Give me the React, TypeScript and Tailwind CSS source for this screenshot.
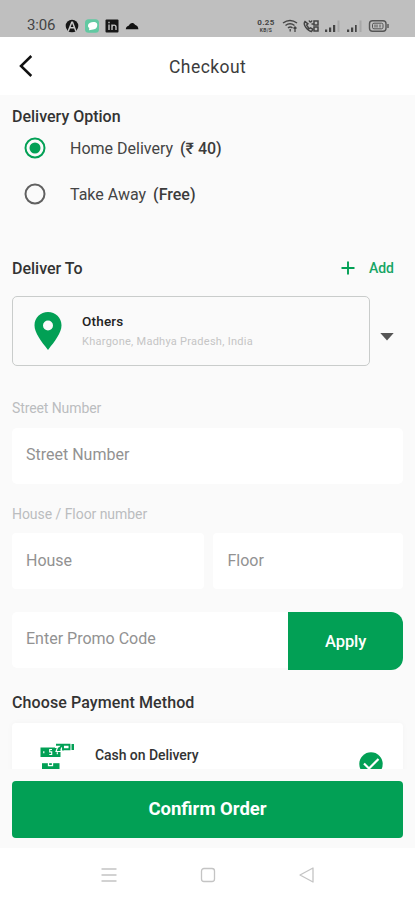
import type { ReactNode } from "react";

function StatusBar() {
  return (
    <div className="flex h-[37px] shrink-0 items-end bg-[#bfbfbf] pb-[4px] pl-[27px] pr-[25px] text-[#444]">
      <span className="w-[38px] whitespace-nowrap text-[15px] leading-[15px] tracking-[-0.2px]">3:06</span>
      <svg className="block h-[14px] w-[74px]" viewBox="0 0 74 14">
        <circle cx="7" cy="7" r="6.3" fill="#161616" />
        <path d="M3.3 12 6.8 3.2h.7L10.8 12M4.8 8.8h4.7" fill="none" stroke="#c8c8c8" strokeWidth="1.5" />
        <rect x="20" y="0.3" width="14" height="13.4" rx="3.5" fill="#62c9a2" />
        <path d="M23 6c1-3 7-4 9-1.500 1 3-1 6-4 6l-4 .8.3-2Q22.500 8 23 6" fill="#fff" />
        <rect x="40.500" y="0.500" width="13" height="13" rx="1" fill="#171717" />
        <path d="M44 5.500V11M44 2.800v1.400M47 11V5.500M47 8c0-2.500 4-2.500 4 0v3" fill="none" stroke="#c4c4c4" strokeWidth="1.400" />
        <path d="M60.800 10.200C60.800 8.200 62.500 7 64 6.500c.8-3 4.600-3.600 6-.8 2 .6 3.400 2.200 3.400 4.500z" fill="#111" />
      </svg>
      <span className="ml-auto flex w-[20px] flex-col items-center">
        <span className="text-[8px] font-bold leading-[9px] tracking-[0.3px]">0.25</span>
        <span className="text-[5px] font-bold leading-[6px] tracking-[0.300px]">KB/S</span>
      </span>
      <svg className="ml-[6px] block h-[14px] w-[108px]" viewBox="0 0 108 14">
        <g fill="none" stroke="#444" strokeWidth="1.500">
          <path d="M1 4Q8-1.200 15 4M3.500 6.500q4.500-3.300 9 0M6 9q2.200-1.800 4.500 0" />
          <path d="M8.200 10v2.500M13 8v5M11.500 9.500l1.500-1.500 1.500 1.500" strokeWidth="1.300" />
          <path d="M23 2.500c-2.500 3 2.500 9.500 6.500 10l1.500-2.200-2.500-1.500-1.500 1L24.700 6l1.200-1.200z" />
          <path d="M27 1.500c1 2 2 2 3 0M32 2h4v4h-4zM32 8h4v4h-4zM29.500 5h2" />
        </g>
        <g fill="#444">
          <path d="M43 10.500h2.200V13H43zM47 8.500h2.200V13H47zM51 6h2.200v7H51z" />
          <path d="M65 10.500h2.200V13H65zM69 8.500h2.200V13H69zM73 6h1.700v7H73z" />
        </g>
        <g fill="#a8a8a8">
          <path d="M55.500 1.500h2V13h-2zM77.500 1.500h2V13h-2z" />
        </g>
        <g fill="none" stroke="#555" strokeWidth="1.400">
          <rect x="87.500" y="1.700" width="16.500" height="10.600" rx="3" />
          <path d="M106 5v4" />
          <rect x="90.500" y="4.200" width="10.500" height="5.600" rx="1.500" strokeWidth="1" />
          <path d="M93 5.500v3M95 5.500v3M98 5.500v3" strokeWidth="1" />
        </g>
      </svg>
    </div>
  );
}

function Header() {
  return (
    <header className="flex h-[58px] shrink-0 items-center bg-white pl-[18px]">
      <svg className="block h-[24px] w-[16px]" viewBox="0 0 16 24">
        <path d="M13.300 2 3 12l10.300 10" fill="none" stroke="#111" strokeWidth="2.500" />
      </svg>
      <h1 className="ml-[135px] mt-[1px] text-[17.500px] leading-[24px] tracking-[0.450px] text-[#3c3c3c]">Checkout</h1>
    </header>
  );
}

function Radio({ checked }: { checked?: boolean }) {
  return (
    <svg className="block size-[22px] shrink-0" viewBox="0 0 22 22">
      <circle cx="11" cy="11" r="9.500" fill="none" stroke={checked ? "#02a055" : "#606060"} strokeWidth="2" />
      {checked && <circle cx="11" cy="11" r="5.500" fill="#02a055" />}
    </svg>
  );
}

function Option({ label, note, checked }: { label: string; note: string; checked?: boolean }) {
  return (
    <div className="flex h-[46px] items-center pl-[24px]">
      <Radio checked={checked} />
      <span className="ml-[24px] mt-[2px] whitespace-nowrap text-[16px] leading-[20px] text-[#444]">
        {label} <span className="ml-[3px] font-medium text-[#3c3c3c]">{note}</span>
      </span>
    </div>
  );
}

function Field({ children, className }: { children: ReactNode; className: string }) {
  return (
    <div className={`flex h-[56px] items-center bg-white pb-[3px] pl-[14px] text-[16px] leading-[20px] text-[#929292] ${className}`}>
      {children}
    </div>
  );
}

function CashIcon() {
  return (
    <svg className="block h-[26px] w-[36px]" viewBox="0 0 36 26">
      <g fill="#02a055">
        <path d="M.5 4.500h20v9.500H.5z" />
        <path d="M2 20.200h17.500V26H2z" />
        <path d="M31.500 1H34v6h-2.500z" />
      </g>
      <path d="M16 1.800h6.500L18 7.200M23 7.500V1.800h6.500v4.400H23" fill="none" stroke="#02a055" strokeWidth="1.900" />
      <path d="M15 4.500h2.500L16 8.500h5" fill="none" stroke="#fff" strokeWidth="1.100" />
      <path d="M12 6.500H9.700v2.400h2V11.500H9.300" fill="none" stroke="#fff" strokeWidth="1.100" />
      <path d="M3.800 8.300v2M17.300 9.300v2" fill="none" stroke="#fff" strokeWidth="1.200" />
      <path d="M8.500 20v2.600h4V20" fill="none" stroke="#fff" strokeWidth="1.300" />
    </svg>
  );
}

export default function App() {
  return (
    <div className="flex h-[900px] w-[415px] flex-col overflow-hidden bg-[#fafafa] font-['Roboto','Noto_Sans',sans-serif]">
      <StatusBar />
      <Header />
      <main className="flex h-[674px] shrink-0 flex-col overflow-hidden px-[12px]">
        <h2 className="mt-[12px] text-[16px] font-medium leading-[20px] text-[#333]">Delivery Option</h2>
        <div className="-ml-[12px] -mt-[2px]">
          <Option label="Home Delivery" note="(₹ 40)" checked />
          <Option label="Take Away" note="(Free)" />
        </div>

        <div className="mt-[42px] flex h-[20px] items-center">
          <h2 className="text-[16px] font-medium leading-[20px] text-[#333]">Deliver To</h2>
          <svg className="-mt-[2px] ml-auto block size-[14px]" viewBox="0 0 14 14">
            <path d="M7 .5v13M.5 7h13" stroke="#02a055" strokeWidth="1.900" />
          </svg>
          <span className="-mt-[2px] ml-[14px] mr-[9px] text-[14px] font-medium leading-[20px] text-[#16a565]">Add</span>
        </div>
        <div className="mt-[17px] flex h-[70px] items-center">
          <div className="flex h-[70px] w-[358px] items-center rounded-[5px] border-[1.500px] border-[#c9cccb] pl-[21px]">
            <svg className="block h-[40px] w-[28px]" viewBox="0 0 28 40">
              <path fillRule="evenodd" d="M14 1C6.500 1 .5 6.800.5 14.300.5 22 7 30 14 39c7-9 13.500-17 13.500-24.700C27.500 6.800 21.500 1 14 1m0 8.500a5 5 0 1 1 0 10 5 5 0 0 1 0-10" fill="#02a055" />
            </svg>
            <div className="-mt-[1px] ml-[20px] flex flex-col whitespace-nowrap">
              <span className="text-[13.500px] font-medium leading-[18px] tracking-[0.200px] text-[#222]">Others</span>
              <span className="mt-[4px] text-[11px] leading-[16px] tracking-[0.270px] text-[#c5c5c5]">Khargone, Madhya Pradesh, India</span>
            </div>
          </div>
          <svg className="ml-[10px] mt-[12px] block h-[8px] w-[14px]" viewBox="0 0 14 8">
            <path d="M.3 0h13.400L7 7.500z" fill="#555" />
          </svg>
        </div>

        <span className="mt-[32px] text-[14px] leading-[20px] tracking-[-0.100px] text-[#bbbdbf]">Street Number</span>
        <Field className="mt-[10px] shrink-0 rounded-[5px]">Street Number</Field>
        <span className="mt-[20px] text-[14px] leading-[20px] tracking-[-0.050px] text-[#bbbdbf]">House / Floor number</span>
        <div className="mt-[9px] flex gap-[9px]">
          <Field className="w-[192px] rounded-[4px]"><span className="pt-[2px]">House</span></Field>
          <Field className="w-[191px] rounded-[4px]"><span className="pl-[1px] pt-[2px]">Floor</span></Field>
        </div>
        <div className="mt-[23px] flex shrink-0">
          <Field className="w-[277px] rounded-l-[5px]">Enter Promo Code</Field>
          <button className="h-[58px] w-[115px] rounded-r-[12px] bg-[#02a055] pt-[2px] text-[16.500px] font-medium tracking-[-0.100px] text-white">Apply</button>
        </div>
        <h2 className="mt-[23px] text-[16px] font-medium leading-[20px] tracking-[0.100px] text-[#333]">Choose Payment Method</h2>
        <div className="mt-[10px] flex h-[70px] shrink-0 items-start rounded-t-[4px] bg-white pl-[28px] pr-[20px] shadow-[0_0_6px_rgba(0,0,0,0.030)]">
          <div className="mt-[20px]"><CashIcon /></div>
          <span className="ml-[19px] mt-[22px] text-[14px] font-medium leading-[20px] tracking-[-0.060px] text-[#333]">Cash on Delivery</span>
          <svg className="ml-auto mt-[29px] block size-[24px]" viewBox="0 0 24 24">
            <circle cx="12" cy="12" r="11.700" fill="#02a055" />
            <path d="M5 11.500l5 5L19.500 7" fill="none" stroke="#fff" strokeWidth="2.200" />
          </svg>
        </div>
      </main>
      <div className="h-[79px] shrink-0 px-[12px] pt-[12px]">
        <button className="block h-[57px] w-full rounded-[4px] bg-[#02a055] pt-[1px] text-[18.500px] font-bold text-white">Confirm Order</button>
      </div>
      <nav className="flex h-[52px] shrink-0 items-center bg-white pl-[101px] pt-[2px]">
        <svg className="block h-[16px] w-[214px]" viewBox="0 0 214 16">
          <g fill="none" stroke="#c4c4c4" strokeWidth="1.300">
            <path d="M.5 2h15M.5 8h15M.5 14h15" />
            <rect x="100.500" y="1.500" width="13" height="13" rx="2.500" />
            <path d="M212 1v14l-13-7z" strokeLinejoin="round" />
          </g>
        </svg>
      </nav>
    </div>
  );
}
